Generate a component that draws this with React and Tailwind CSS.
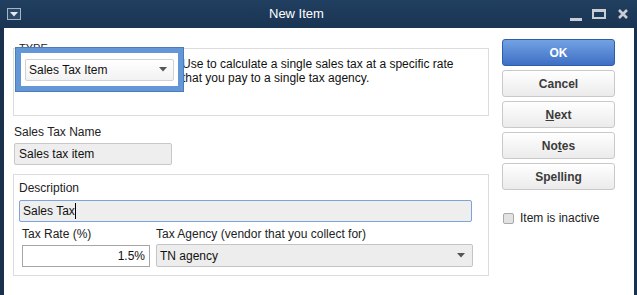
import React from "react";

const font = { fontFamily: '"Liberation Sans", Arial, sans-serif' };

function Arrow() {
  return (
    <svg width="8" height="5" viewBox="0 0 8 5" className="shrink-0">
      <path d="M0 0 L8 0 L4 4.5 Z" fill="#555" />
    </svg>
  );
}

function Btn({ children, primary }) {
  return (
    <div
      className={`h-[27px] flex items-center justify-center rounded-[3px] border text-[12px] font-bold ${
        primary
          ? "border-[#2f5ea8] bg-gradient-to-b from-[#73a2e3] to-[#3f6fc4] text-white"
          : "border-[#c9c9c9] bg-gradient-to-b from-white to-[#ebebeb] text-[#3b3b3b]"
      }`}
    >
      {children}
    </div>
  );
}

export default function App() {
  return (
    <div className="w-[637px] h-[295px] flex flex-col bg-[#19314d] text-[12px] leading-[14px] text-[#111]" style={font}>
      {/* title bar */}
      <div className="h-[28px] flex items-center bg-gradient-to-b from-[#213f60] to-[#1a3453] shrink-0">
        <div className="ml-[7px] w-[14px] h-[12px] border border-[#a9b4c0] bg-[#2a4a6c] flex items-center justify-center">
          <svg width="8" height="5" viewBox="0 0 8 5">
            <path d="M0 0 L8 0 L4 4.5 Z" fill="#e6eaee" />
          </svg>
        </div>
        <div className="ml-[248px] text-white text-[13px]">New Item</div>
        <div className="ml-auto mr-[9px] flex items-center gap-[10px]">
          <div className="w-[12px] h-[3px] bg-[#c9ced3] mt-[10px]" />
          <div className="w-[14px] h-[10px] border-2 border-t-[3px] border-[#c9ced3]" />
          <svg width="10" height="10" viewBox="0 0 10 10" className="ml-[2px]">
            <path d="M1 1 L9 9 M9 1 L1 9" stroke="#c9ced3" strokeWidth="2.6" />
          </svg>
        </div>
      </div>

      {/* body */}
      <div className="flex-1 bg-white ml-[4px] mr-[3px] flex">
        <div className="ml-[9px] w-[476px] pt-[20px]">
          {/* type group */}
          <div className="relative h-[68px] border border-[#dcdcdc] flex items-start">
            <span className="absolute left-[5px] top-[-7px] text-[11px] leading-[12px] text-[#222]">TYPE</span>
            <div className="relative ml-[1px] -mt-[2px] w-[169px] h-[45px] border border-[#4a7cbc] shrink-0">
              <div className="w-full h-full border-[5px] border-[#6397d5] bg-white flex items-center justify-center">
                <div className="w-[149px] h-[22px] rounded-[2px] border border-[#d2d2d2] bg-gradient-to-b from-white to-[#f2f2f2] flex items-center pl-[3px] pr-[6px]">
                  <span className="flex-1">Sales Tax Item</span>
                  <Arrow />
                </div>
              </div>
            </div>
            <p className="mt-[8px] -ml-[2px] text-[12px] leading-[14px]">
              Use to calculate a single sales tax at a specific rate
              <br />
              that you pay to a single tax agency.
            </p>
          </div>

          {/* sales tax name */}
          <div className="mt-[9px] ml-[1px] text-[#222]">Sales Tax Name</div>
          <div className="mt-[4px] ml-[1px] w-[158px] h-[22px] rounded-[2px] border border-[#c8c8c8] bg-[#eeeeee] flex items-center pl-[4px]">
            Sales tax item
          </div>

          {/* description group */}
          <div className="mt-[9px] h-[102px] border border-[#dcdcdc] pt-[6px] pl-[5px]">
            <div className="text-[#222]">Description</div>
            <div className="mt-[5px] w-[453px] h-[22px] rounded-[2px] border border-[#7da2dc] bg-[#eeeeee] flex items-center pl-[3px]">
              Sales Tax
              <span className="w-px h-[16px] bg-black" />
            </div>
            <div className="mt-[5px] flex gap-[6px] pl-[3px]">
              <div className="w-[128px]">
                <div className="text-[#222]">Tax Rate (%)</div>
                <div className="mt-[4px] h-[22px] border border-[#a6a6a6] bg-white flex items-center justify-end pr-[4px]">
                  1.5%
                </div>
              </div>
              <div className="w-[317px]">
                <div className="text-[#222]">Tax Agency (vendor that you collect for)</div>
                <div className="mt-[3px] h-[23px] rounded-[2px] border border-[#c4c4c4] bg-[#ededed] flex items-center pl-[3px] pr-[7px]">
                  <span className="flex-1">TN agency</span>
                  <Arrow />
                </div>
              </div>
            </div>
          </div>
        </div>

        {/* buttons */}
        <div className="ml-[13px] w-[113px] pt-[11px]">
          <div className="flex flex-col gap-[4px]">
            <Btn primary>OK</Btn>
            <Btn>Cancel</Btn>
            <Btn>
              <span className="underline">N</span>ext
            </Btn>
            <Btn>
              No<span className="underline">t</span>es
            </Btn>
            <Btn>
              Spellin<span className="underline">g</span>
            </Btn>
          </div>
          <div className="mt-[21px] flex items-center gap-[6px] pl-[1px]">
            <div className="w-[11px] h-[11px] rounded-[2px] border border-[#a9a9a9] bg-[#e2e2e2]" />
            <span className="text-[#222]">Item is inactive</span>
          </div>
        </div>
      </div>
    </div>
  );
}
